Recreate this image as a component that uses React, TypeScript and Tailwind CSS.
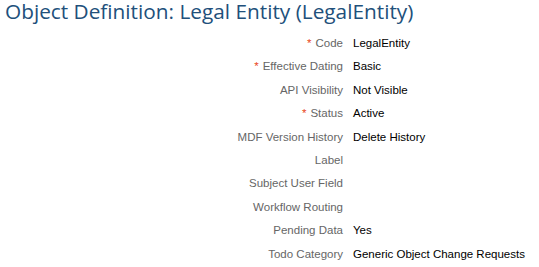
import React from 'react';

type Field = { label: string; value?: string; required?: boolean };

const fields: Field[] = [
  { label: 'Code', value: 'LegalEntity', required: true },
  { label: 'Effective Dating', value: 'Basic', required: true },
  { label: 'API Visibility', value: 'Not Visible' },
  { label: 'Status', value: 'Active', required: true },
  { label: 'MDF Version History', value: 'Delete History' },
  { label: 'Label' },
  { label: 'Subject User Field' },
  { label: 'Workflow Routing' },
  { label: 'Pending Data', value: 'Yes' },
  { label: 'Todo Category', value: 'Generic Object Change Requests' },
];

export default function App() {
  return (
    <div className="w-[539px] h-[267px] bg-white overflow-hidden">
      <h1 className="pl-[5px] text-[20.8px] leading-[22px] text-[#21507b] font-['Open_Sans',sans-serif] whitespace-nowrap">
        Object Definition: Legal Entity (LegalEntity)
      </h1>

      <div className="mt-[10px] grid grid-cols-[343px_1fr] gap-x-[10px] auto-rows-[23.4px] items-center font-['Liberation_Sans',Arial,sans-serif] text-[11.5px]">
        {fields.map((f) => (
          <React.Fragment key={f.label}>
            <div className="text-right text-[#666666]">
              {f.required && <span className="text-[#e9461b] mr-[4px]">*</span>}
              {f.label}
            </div>
            <div className="text-black">{f.value ?? ''}</div>
          </React.Fragment>
        ))}
      </div>
    </div>
  );
}
